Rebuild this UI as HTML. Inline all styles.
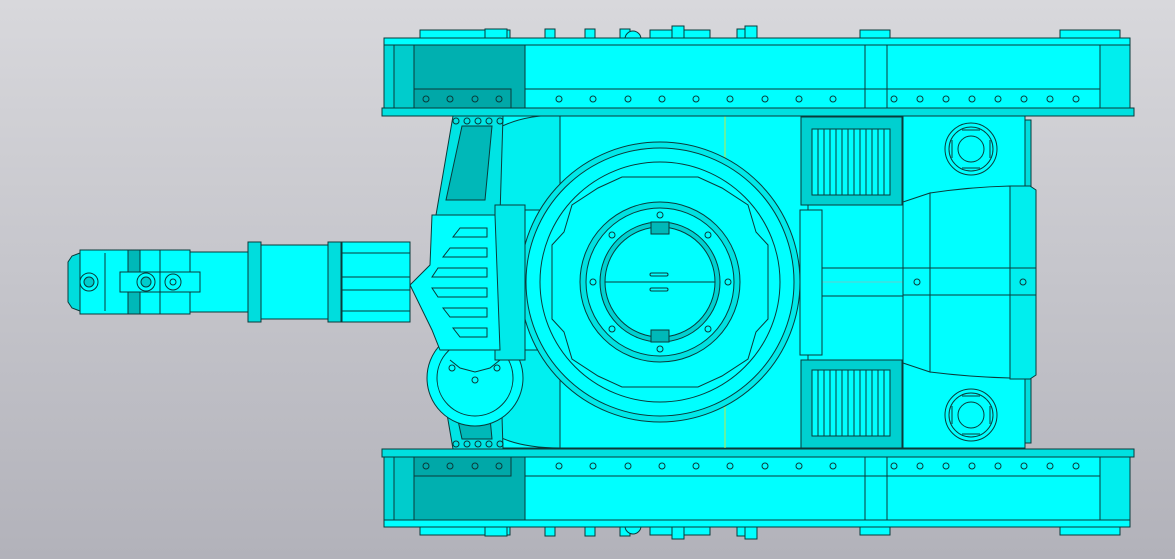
<!DOCTYPE html>
<html><head><meta charset="utf-8"><style>
html,body{margin:0;padding:0;width:1175px;height:559px;overflow:hidden}
body{background:linear-gradient(#d8d8dc,#b2b2ba)}
svg{display:block}
</style></head><body>
<svg width="1175" height="559" viewBox="0 0 1175 559" xmlns="http://www.w3.org/2000/svg" stroke="#0a3a3a" stroke-width="1" fill="#00ffff">
<defs>
<g id="track">
  <rect x="420" y="30" width="90" height="9"/>
  <rect x="485" y="29" width="22" height="9"/>
  <rect x="545" y="29" width="10" height="9"/>
  <rect x="585" y="29" width="10" height="9"/>
  <rect x="620" y="29" width="10" height="9"/>
  <path d="M625 39 a8 8 0 0 1 16 0z"/>
  <rect x="650" y="30" width="60" height="9"/>
  <rect x="672" y="26" width="12" height="13"/>
  <rect x="737" y="29" width="18" height="9"/>
  <rect x="745" y="26" width="12" height="13"/>
  <rect x="860" y="30" width="30" height="9"/>
  <rect x="1060" y="30" width="60" height="9"/>
  <rect x="384" y="38" width="746" height="8"/>
  <rect x="394" y="45" width="736" height="64"/>
  <rect x="384" y="45" width="12" height="64" fill="#00d8d8"/>
  <rect x="414" y="45" width="111" height="64" fill="#00b0b0"/>
  <rect x="394" y="45" width="20" height="64" fill="#00cccc"/>
  <rect x="414" y="89" width="97" height="19" fill="#00a8a8"/>
  <rect x="525" y="45" width="575" height="64"/>
  <line x1="525" y1="89" x2="1100" y2="89"/>
  <line x1="865" y1="45" x2="865" y2="109"/>
  <line x1="887" y1="45" x2="887" y2="109"/>
  <rect x="1100" y="45" width="30" height="64" fill="#00eeee"/>
  <rect x="382" y="108" width="752" height="8" fill="#00e0e0"/>
  <g fill="none">
   <circle cx="426" cy="99" r="3"/><circle cx="450" cy="99" r="3"/><circle cx="475" cy="99" r="3"/><circle cx="499" cy="99" r="3"/>
   <circle cx="559" cy="99" r="3"/><circle cx="593" cy="99" r="3"/><circle cx="628" cy="99" r="3"/><circle cx="662" cy="99" r="3"/><circle cx="696" cy="99" r="3"/><circle cx="730" cy="99" r="3"/><circle cx="765" cy="99" r="3"/><circle cx="799" cy="99" r="3"/><circle cx="833" cy="99" r="3"/>
   <circle cx="894" cy="99" r="3"/><circle cx="920" cy="99" r="3"/><circle cx="946" cy="99" r="3"/><circle cx="972" cy="99" r="3"/><circle cx="998" cy="99" r="3"/><circle cx="1024" cy="99" r="3"/><circle cx="1050" cy="99" r="3"/><circle cx="1076" cy="99" r="3"/>
  </g>
  <path d="M453 116 L503 116 L500 215 L436 215 Z" fill="#00e4e4"/>
  <path d="M462 126 L492 126 L485 200 L446 200 Z" fill="#00b8b8"/>
  <g fill="none"><circle cx="456" cy="121" r="3"/><circle cx="467" cy="121" r="3"/><circle cx="478" cy="121" r="3"/><circle cx="489" cy="121" r="3"/><circle cx="500" cy="121" r="3"/></g>
 </g>
</defs>

<rect x="480" y="115" width="545" height="333"/>
<rect x="1025" y="120" width="6" height="323" fill="#00dddd"/>
<line x1="560" y1="115" x2="560" y2="448" stroke="#2aa"/>
<line x1="725" y1="115" x2="725" y2="448" stroke="#bfe84a"/>
<line x1="808" y1="115" x2="808" y2="448"/>
<line x1="903" y1="115" x2="903" y2="448"/>
<line x1="560" y1="282" x2="1025" y2="282" stroke="#6cc"/>
<line x1="820" y1="268" x2="1025" y2="268"/>
<line x1="820" y1="296" x2="1025" y2="296"/>
<rect x="800" y="210" width="22" height="145"/>
<path d="M495 130 Q520 115 560 115 L560 210 L495 210 Z" fill="#00f0f0"/>
<path d="M495 435 Q520 448 560 448 L560 350 L495 350 Z" fill="#00f0f0"/>

<use href="#track"/>
<use href="#track" transform="translate(0,565) scale(1,-1)"/>

<g>
 <rect x="801" y="117" width="101" height="88" fill="#00d0d0"/>
 <rect x="812" y="129" width="78" height="66"/>
 <path d="M818 129v66M824 129v66M830 129v66M836 129v66M842 129v66M848 129v66M854 129v66M860 129v66M866 129v66M872 129v66M878 129v66M884 129v66" fill="none"/>
 <rect x="801" y="360" width="101" height="88" fill="#00d0d0"/>
 <rect x="812" y="370" width="78" height="66"/>
 <path d="M818 370v66M824 370v66M830 370v66M836 370v66M842 370v66M848 370v66M854 370v66M860 370v66M866 370v66M872 370v66M878 370v66M884 370v66" fill="none"/>
</g>

<g fill="none">
 <circle cx="971" cy="149" r="26"/><circle cx="971" cy="149" r="22"/><circle cx="971" cy="149" r="13"/>
 <path d="M962 130h18M962 168h18M952 140v18M990 140v18"/>
 <circle cx="971" cy="415" r="26"/><circle cx="971" cy="415" r="22"/><circle cx="971" cy="415" r="13"/>
 <path d="M962 396h18M962 434h18M952 406v18M990 406v18"/>
</g>

<path d="M903 202 L930 193 L930 372 L903 363 Z"/>
<path d="M930 193 Q970 187 1010 186 L1010 378 Q970 377 930 372 Z"/>
<path d="M1010 186 L1030 186 L1036 190 L1036 375 L1030 379 L1010 379 Z" fill="#00eeee"/>
<line x1="903" y1="268" x2="1036" y2="268"/><line x1="903" y1="295" x2="1036" y2="295"/>
<circle cx="917" cy="282" r="3" fill="none"/><circle cx="1023" cy="282" r="3" fill="none"/>

<circle cx="660" cy="282" r="140" fill="#00e8e8"/>
<circle cx="660" cy="282" r="134"/>
<circle cx="660" cy="282" r="120" fill="none"/>
<path d="M622 177 L698 177 L722 188 L748 205 L756 232 L768 245 L768 319 L756 332 L748 359 L722 376 L698 387 L622 387 L598 376 L572 359 L564 332 L552 319 L552 245 L564 232 L572 205 L598 188 Z" fill="none"/>
<circle cx="660" cy="282" r="80" fill="#00e0e0"/>
<circle cx="660" cy="282" r="74"/>
<circle cx="660" cy="282" r="60" fill="#00d0d0"/>
<circle cx="660" cy="282" r="55"/>
<line x1="605" y1="282" x2="715" y2="282"/>
<rect x="651" y="222" width="18" height="12" fill="#00b8b8"/>
<rect x="651" y="330" width="18" height="12" fill="#00b8b8"/>
<g fill="none"><circle cx="660" cy="215" r="3"/><circle cx="612" cy="235" r="3"/><circle cx="708" cy="235" r="3"/><circle cx="612" cy="329" r="3"/><circle cx="708" cy="329" r="3"/><circle cx="660" cy="349" r="3"/><circle cx="593" cy="282" r="3"/><circle cx="728" cy="282" r="3"/></g>
<rect x="650" y="273" width="18" height="3" rx="1.5" fill="none"/><rect x="650" y="288" width="18" height="3" rx="1.5" fill="none"/>

<circle cx="475" cy="378" r="48"/>
<circle cx="475" cy="378" r="38" fill="none"/>
<path d="M450 360 L460 368 L475 372 L490 368 L500 360" fill="none"/>
<g fill="none"><circle cx="452" cy="368" r="3"/><circle cx="475" cy="380" r="3"/><circle cx="497" cy="368" r="3"/></g>

<rect x="495" y="205" width="30" height="155" fill="#00eaea"/>
<path d="M410 285 L430 265 L432 215 L495 215 L500 350 L440 350 L432 330 Z"/>
<g fill="none">
 <path d="M460 228 L487 228 L487 237 L453 237 Z"/>
 <path d="M450 248 L487 248 L487 257 L443 257 Z"/>
 <path d="M438 268 L487 268 L487 277 L432 277 Z"/>
 <path d="M432 288 L487 288 L487 297 L438 297 Z"/>
 <path d="M443 308 L487 308 L487 317 L450 317 Z"/>
 <path d="M453 328 L487 328 L487 337 L460 337 Z"/>
</g>

<rect x="342" y="242" width="68" height="80"/>
<line x1="342" y1="253" x2="410" y2="253"/><line x1="342" y1="277" x2="410" y2="277"/><line x1="342" y1="290" x2="410" y2="290"/><line x1="342" y1="311" x2="410" y2="311"/>
<rect x="260" y="245" width="70" height="74"/>
<rect x="248" y="242" width="13" height="80" fill="#00dddd"/>
<rect x="328" y="242" width="13" height="80" fill="#00dddd"/>
<rect x="190" y="252" width="58" height="60"/>
<rect x="80" y="250" width="110" height="64"/>
<path d="M80 253 L72 256 L68 262 L68 302 L72 308 L80 311 Z" fill="#00dddd"/>
<rect x="128" y="250" width="12" height="64" fill="#00b8b8"/>
<rect x="120" y="272" width="80" height="20"/>
<line x1="160" y1="250" x2="160" y2="314"/><line x1="105" y1="253" x2="105" y2="311"/>
<g fill="none"><circle cx="89" cy="282" r="9"/><circle cx="146" cy="282" r="9"/><circle cx="173" cy="282" r="8"/><circle cx="173" cy="282" r="3"/></g>
<circle cx="89" cy="282" r="5" fill="#00cccc"/><circle cx="146" cy="282" r="5" fill="#00cccc"/>
</svg>
</body></html>
